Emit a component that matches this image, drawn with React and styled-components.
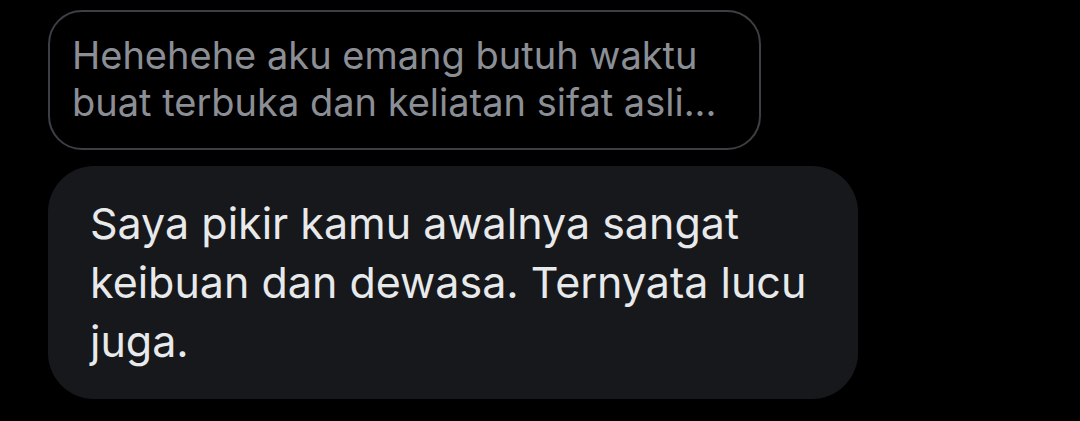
import React from 'react'
import styled, { createGlobalStyle } from 'styled-components'

const GlobalStyle = createGlobalStyle`
  body {
    margin: 0;
    background: #000;
  }
`

const Thread = styled.div`
  display: flex;
  flex-direction: column;
  align-items: flex-start;
  gap: 16px;
  padding: 10px 0 0 48px;
  height: 421px;
  box-sizing: border-box;
  font-family: Inter, Roboto, sans-serif;
`

const Quote = styled.div`
  width: 713px;
  height: 140px;
  box-sizing: border-box;
  border: 2px solid #3c3f43;
  border-radius: 34px;
  padding: 20px 0 0 22px;
  color: #8b8f95;
  font-size: 38px;
  line-height: 47px;
`

const Bubble = styled.div`
  width: 810px;
  height: 233px;
  box-sizing: border-box;
  background: #16181c;
  border-radius: 46px;
  padding: 28px 0 0 42px;
  color: #e7e9ea;
  font-size: 43px;
  line-height: 59px;
`

export default function App() {
  return (
    <>
      <GlobalStyle />
      <Thread>
        <Quote>
          Hehehehe aku emang butuh waktu
          <br />
          buat terbuka dan keliatan sifat asli...
        </Quote>
        <Bubble>
          Saya pikir kamu awalnya sangat
          <br />
          keibuan dan dewasa. Ternyata lucu
          <br />
          juga.
        </Bubble>
      </Thread>
    </>
  )
}
